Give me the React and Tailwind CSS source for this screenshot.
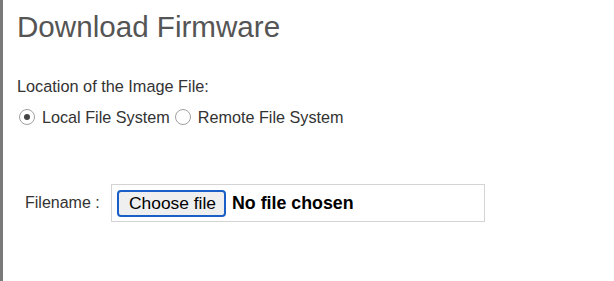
export default function App() {
  return (
    <div className="w-[614px] h-[281px] bg-white overflow-hidden flex" style={{ fontFamily: '"Liberation Sans", Arial, sans-serif' }}>
      <div className="w-[3px] h-full bg-[#7a7a7a] shrink-0" />
      <div className="flex-1 pl-[14px]">
        <h1 className="text-[29.6px] leading-none text-[#555] mt-[12px] font-normal">Download Firmware</h1>
        <p className="text-[16.3px] leading-none text-[#333] mt-[36px]">Location of the Image File:</p>
        <div className="flex items-center mt-[15px] text-[16.2px] text-[#333] leading-none">
          <span className="w-[16px] h-[16px] rounded-full border border-[#a0a0a0] flex items-center justify-center ml-[2px] mr-[7px]">
            <span className="w-[6px] h-[6px] rounded-full bg-[#444]" />
          </span>
          <span>Local File System</span>
          <span className="w-[16px] h-[16px] rounded-full border border-[#a0a0a0] ml-[5px] mr-[7px]" />
          <span>Remote File System</span>
        </div>
        <div className="flex items-center mt-[59px]">
          <span className="text-[16px] text-[#333] ml-[8px] w-[86px]">Filename :</span>
          <div className="w-[374px] h-[38px] border border-[#d4d4d4] flex items-center px-[5px]">
            <span className="h-[27px] pl-[10px] pr-[8px] flex items-center rounded-[4px] border-2 border-[#1a5fc8] bg-[#efefef] text-[17.4px] text-black">Choose file</span>
            <span className="ml-[6px] text-[17.8px] font-bold text-black">No file chosen</span>
          </div>
        </div>
      </div>
    </div>
  );
}
